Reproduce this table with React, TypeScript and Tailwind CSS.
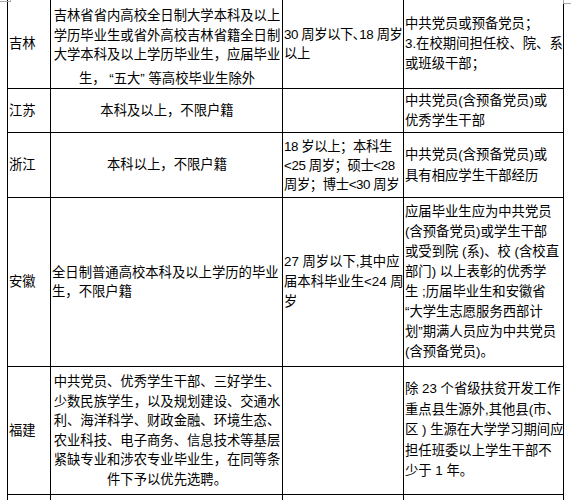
import React from "react";

type Line = React.ReactNode;

function Lines({ lines, className = "" }: { lines: Line[]; className?: string }) {
  return (
    <div className={`whitespace-nowrap ${className}`}>
      {lines.map((l, i) => (
        <div key={i}>{l}</div>
      ))}
    </div>
  );
}

function Cell({
  children,
  first,
  className = "",
}: {
  children?: React.ReactNode;
  first?: boolean;
  className?: string;
}) {
  return (
    <div
      className={`flex items-center border-r border-b border-black ${first ? "border-l pl-[1px]" : "pl-[1px]"} ${className}`}
    >
      {children}
    </div>
  );
}

export default function App() {
  return (
    <div className="relative w-[571px] h-[500px] overflow-hidden bg-white text-black font-['Liberation_Sans','Noto_Sans_CJK_SC',sans-serif] text-[13.33px] leading-[19.5px]">
      {/* word corner marks */}
      <span className="absolute left-0 top-0 w-[11px] h-[2px] border-r border-b border-[#a8a8a8]" />
      <span className="absolute left-[563px] top-0 w-[8px] h-[4px] border-l border-b border-[#a8a8a8]" />

      <div className="ml-[7px] grid grid-cols-[44px_232px_121px_160px] grid-rows-[89px_44px_65px_169px_128px_60px]">
        {/* 吉林 */}
        <Cell first>吉林</Cell>
        <Cell className="justify-center text-center pt-[6px]">
          <Lines
            lines={[
              "吉林省省内高校全日制大学本科及以上",
              "学历毕业生或省外高校吉林省籍全日制",
              "大学本科及以上学历毕业生，应届毕业",
              <span className="inline-block mt-[4px]">生， “五大” 等高校毕业生除外</span>,
            ]}
          />
        </Cell>
        <Cell>
          <Lines className="tracking-[-0.4px]" lines={["30 周岁以下､18 周岁", "以上"]} />
        </Cell>
        <Cell>
          <Lines
            className="leading-[20px]"
            lines={["中共党员或预备党员；", "3.在校期间担任校、院、系", "或班级干部；"]}
          />
        </Cell>

        {/* 江苏 */}
        <Cell first>江苏</Cell>
        <Cell className="justify-center">本科及以上，不限户籍</Cell>
        <Cell />
        <Cell>
          <Lines className="leading-[20px]" lines={["中共党员(含预备党员)或", "优秀学生干部"]} />
        </Cell>

        {/* 浙江 */}
        <Cell first>浙江</Cell>
        <Cell className="justify-center">本科以上，不限户籍</Cell>
        <Cell>
          <Lines
            className="tracking-[-0.4px] leading-[19px]"
            lines={["18 岁以上；本科生", "<25 周岁；硕士<28", "周岁；博士<30 周岁"]}
          />
        </Cell>
        <Cell>
          <Lines className="leading-[21px]" lines={["中共党员(含预备党员)或", "具有相应学生干部经历"]} />
        </Cell>

        {/* 安徽 */}
        <Cell first>安徽</Cell>
        <Cell>
          <Lines lines={["全日制普通高校本科及以上学历的毕业", "生，不限户籍"]} />
        </Cell>
        <Cell>
          <Lines
            className="leading-[20px]"
            lines={["27 周岁以下,其中应", "届本科毕业生<24 周", "岁"]}
          />
        </Cell>
        <Cell>
          <Lines
            className="leading-[20px]"
            lines={[
              "应届毕业生应为中共党员",
              "(含预备党员)或学生干部",
              "或受到院 (系)、校 (含校直",
              "部门) 以上表彰的优秀学",
              "生 ;历届毕业生和安徽省",
              " “大学生志愿服务西部计",
              "划”期满人员应为中共党员",
              "(含预备党员)。",
            ]}
          />
        </Cell>

        {/* 福建 */}
        <Cell first>福建</Cell>
        <Cell className="justify-center text-center">
          <Lines
            lines={[
              "中共党员、优秀学生干部、三好学生、",
              "少数民族学生，以及规划建设、交通水",
              "利、海洋科学、财政金融、环境生态、",
              "农业科技、电子商务、信息技术等基层",
              "紧缺专业和涉农专业毕业生，在同等条",
              "件下予以优先选聘。",
            ]}
          />
        </Cell>
        <Cell />
        <Cell>
          <Lines
            className="leading-[20.5px]"
            lines={[
              "除 23 个省级扶贫开发工作",
              "重点县生源外,其他县(市、",
              "区 ) 生源在大学学习期间应",
              "担任班委以上学生干部不",
              "少于 1 年。",
            ]}
          />
        </Cell>

        {/* next row, cut off by the window */}
        <Cell first />
        <Cell />
        <Cell />
        <Cell className="items-start pt-[3px]">中共党员(含预备党员)或</Cell>
      </div>
    </div>
  );
}
